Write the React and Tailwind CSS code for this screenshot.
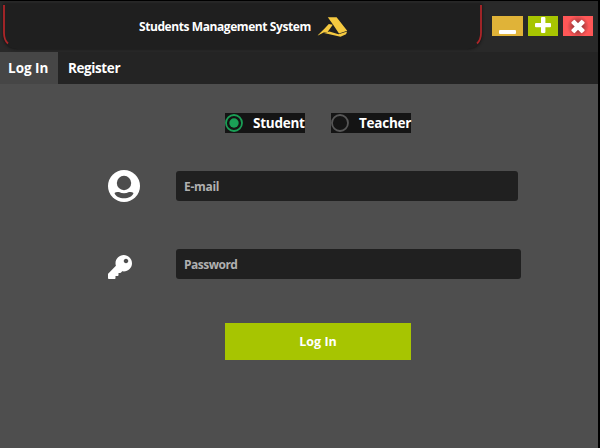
import React from 'react';

function Logo() {
  return (
    <svg className="ml-[6px] h-[20px] w-[31px] shrink-0" viewBox="0 0 31 20" fill="#f5c940">
      <path d="M10.8 .2H19.6L30.2 13.8L22 16.6L16 7.4L10.8 .2Z" />
      <path d="M11.8 7L15.8 7.8L10.6 15L6.6 15.6L0 19L7.6 11.4Z" />
      <path d="M7 16L12.4 14.6L21.5 17.3L30.2 14.4L29 17.2L23.5 19.8Z" />
    </svg>
  );
}

function UserIcon() {
  return (
    <svg className="h-8 w-8 shrink-0" viewBox="0 0 32 32">
      <circle cx="16" cy="16" r="16" fill="#fff" />
      <circle cx="16" cy="13" r="7.2" fill="#4d4d4d" />
      <path d="M6.5 23Q8.2 21.5 11 22.1Q16 24.6 21 22.1Q23.8 21.5 25.5 23C23.6 30 8.4 30 6.5 23Z" fill="#4d4d4d" />
    </svg>
  );
}

function KeyIcon() {
  return (
    <svg className="h-6 w-6 shrink-0" viewBox="0 0 512 512" fill="#fff">
      <path d="M512 176.001C512 273.203 433.202 352 336 352c-11.22 0-22.19-1.062-32.827-3.069l-24.012 27.014A23.999 23.999 0 0 1 261.223 384H224v40c0 13.255-10.745 24-24 24h-40v40c0 13.255-10.745 24-24 24H24c-13.255 0-24-10.745-24-24v-78.059c0-6.365 2.529-12.47 7.029-16.971l161.802-161.802C163.108 213.814 160 195.271 160 176 160 78.798 238.797.001 335.999 0 433.488-.001 512 78.511 512 176.001zM336 128c0 26.51 21.49 48 48 48s48-21.49 48-48-21.49-48-48-48-48 21.49-48 48z" />
    </svg>
  );
}

function Radio({ label, checked }) {
  return (
    <label className="flex h-5 w-20 items-center bg-[#141414]">
      <svg className="h-[18px] w-[18px] shrink-0" viewBox="0 0 18 18">
        <circle cx="9" cy="9" r="8" fill="none" strokeWidth="1.8" stroke={checked ? '#1a9f56' : '#565656'} />
        {checked && <circle cx="9" cy="9" r="4.7" fill="#1a9f56" />}
      </svg>
      <span className="ml-[10px] text-[13.5px] leading-5 tracking-[-0.25px]">{label}</span>
    </label>
  );
}

export default function App() {
  return (
    <div className="h-[448px] w-[600px] overflow-hidden bg-black pt-px pr-0.5 font-['Open_Sans','Noto_Sans',sans-serif] font-bold whitespace-nowrap text-white">
      <div className="flex h-full flex-col bg-[#4e4e4e]">
        <header className="flex h-[51px] shrink-0 bg-[#292929] pl-[3px]">
          <div className="relative mt-[3px] flex h-[45px] w-[479px] items-center rounded-b-[14px] bg-[#1f1f1f] pl-[136px] shadow-[0_0_3px_#111]">
            <span className="w-[172px] pt-px text-[12px] tracking-[-0.42px]">Students Management System</span>
            <Logo />
            <svg className="absolute top-0 left-0 h-[45px] w-[479px]" viewBox="0 0 479 45" fill="none" stroke="#ad2528" strokeWidth="1.8">
              <path d="M1 1V29Q1 36 5 39.5" />
              <path d="M478 1V29Q478 36 474 39.5" />
            </svg>
          </div>
          <div className="mt-[15px] ml-[10px] flex h-5">
            <svg className="h-5 w-[31px]" viewBox="0 0 31 20">
              <rect width="31" height="20" fill="#e0b338" />
              <rect x="7" y="14" width="17" height="4" rx="1" fill="#fff" />
            </svg>
            <svg className="ml-[5px] h-5 w-[30px]" viewBox="0 0 30 20">
              <rect width="30" height="20" fill="#a7c501" />
              <rect x="13" y="1" width="4.4" height="16" rx="1" fill="#fff" />
              <rect x="7" y="7" width="16" height="4.2" rx="1" fill="#fff" />
            </svg>
            <svg className="ml-[5px] h-5 w-[30px]" viewBox="0 0 30 20">
              <defs>
                <radialGradient id="closeShade">
                  <stop offset="0.4" stopColor="#a63b3e" />
                  <stop offset="1" stopColor="#ff5757" />
                </radialGradient>
              </defs>
              <rect width="30" height="20" fill="#ff5757" />
              <circle cx="15" cy="10.5" r="11" fill="url(#closeShade)" />
              <g transform="rotate(45 15 10.5)" fill="#fff">
                <rect x="12.6" y="2.9" width="4.8" height="15.2" rx="1" />
                <rect x="7.4" y="8.1" width="15.2" height="4.8" rx="1" />
              </g>
            </svg>
          </div>
        </header>
        <nav className="flex h-8 shrink-0 bg-[#242424] text-[13.5px] leading-8">
          <div className="w-[58px] bg-[#464646] pl-2">Log In</div>
          <div className="pl-[10px] tracking-[-0.4px]">Register</div>
        </nav>
        <main className="pt-[29px]">
          <div className="flex gap-[26px] pl-[225px]">
            <Radio label="Student" checked />
            <Radio label="Teacher" />
          </div>
          <div className="mt-[37px] flex h-8 pl-[108px]">
            <UserIcon />
            <div className="mt-px ml-9 h-[30px] w-[342px] rounded-[3px] bg-[#202020] pt-px pl-2 text-[12px] leading-[30px] tracking-[-0.3px] text-[#b0b0b0]">E-mail</div>
          </div>
          <div className="mt-[47px] flex h-[30px] pl-[108px]">
            <div className="mt-1.5 w-8"><KeyIcon /></div>
            <div className="ml-9 h-[30px] w-[345px] rounded-[3px] bg-[#202020] pt-px pl-2 text-[12px] leading-[30px] tracking-[-0.5px] text-[#b0b0b0]">Password</div>
          </div>
          <button className="mt-11 ml-[225px] block h-[37px] w-[186px] bg-[#a7c501] text-[12.5px] leading-[37px]">Log In</button>
        </main>
      </div>
    </div>
  );
}
